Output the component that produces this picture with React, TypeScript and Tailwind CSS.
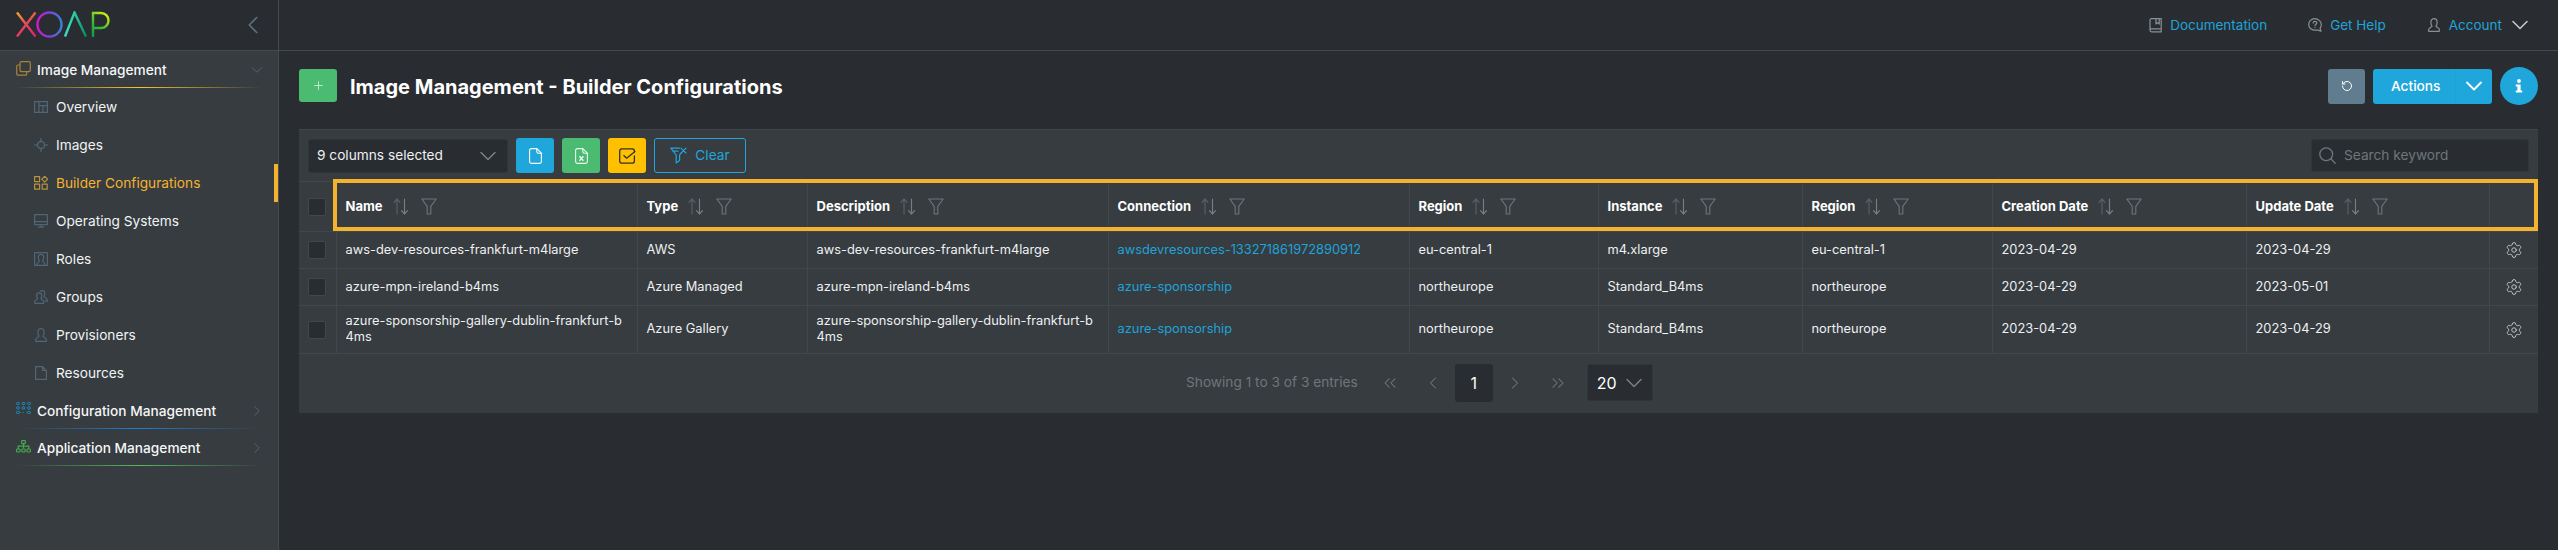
import React from "react";
import { ChevronDown, ChevronLeft, ChevronRight, ChevronsLeft, ChevronsRight, Plus, RotateCcw, Settings } from "lucide-react";

const Logo = () => (
  <svg width="96" height="28" viewBox="0 0 96 28" fill="none" strokeWidth="2.4">
    <defs>
      <linearGradient id="lx" gradientUnits="userSpaceOnUse" x1="1" y1="1" x2="19" y2="26"><stop offset="0" stopColor="#f5a623" /><stop offset="0.5" stopColor="#e8455a" /><stop offset="1" stopColor="#e11d74" /></linearGradient>
      <linearGradient id="lo" x1="0" y1="0" x2="1" y2="0"><stop offset="0" stopColor="#d418c8" /><stop offset="0.5" stopColor="#7d3fd6" /><stop offset="1" stopColor="#3b82d6" /></linearGradient>
      <linearGradient id="la" gradientUnits="userSpaceOnUse" x1="49" y1="26" x2="70" y2="26"><stop offset="0" stopColor="#3fdcc4" /><stop offset="0.5" stopColor="#25c8a0" /><stop offset="1" stopColor="#0a8a55" /></linearGradient>
      <linearGradient id="lp" gradientUnits="userSpaceOnUse" x1="77" y1="26" x2="94" y2="4"><stop offset="0" stopColor="#0a9a50" /><stop offset="0.5" stopColor="#45c02f" /><stop offset="1" stopColor="#e2f00f" /></linearGradient>
    </defs>
    <path d="M1 1.5 L19.5 25.5 M19.5 1.5 L1 25.5" stroke="url(#lx)" />
    <circle cx="33.5" cy="13.5" r="12" stroke="url(#lo)" />
    <path d="M49 25.5 L58.5 1.5 L70 25.5" stroke="url(#la)" />
    <path d="M77 26 V2 H85 A7.5 7.5 0 0 1 85 17 H77" stroke="url(#lp)" />
  </svg>
);

type IP = { className?: string };
const base = { fill: "none", stroke: "currentColor", strokeWidth: 1.2, strokeLinecap: "round" as const, strokeLinejoin: "round" as const };

const ICopy = ({ className }: IP) => (
  <svg width="15" height="15" viewBox="0 0 15 15" {...base} className={className}>
    <rect x="4" y="0.7" width="10.3" height="10" rx="1.4" />
    <path d="M4 4H2A1.4 1.4 0 0 0 .7 5.4V12.8A1.4 1.4 0 0 0 2 14.2H9.4A1.4 1.4 0 0 0 10.8 12.8V10.7" />
  </svg>
);
const IOverview = ({ className }: IP) => (
  <svg width="14" height="12" viewBox="0 0 14 12" {...base} strokeLinecap="butt" className={className}>
    <rect x="0.6" y="0.6" width="12.8" height="10.8" />
    <path d="M5 .6V11.4M5 4.6H13.4M9 4.6V11.4" />
  </svg>
);
const IImages = ({ className }: IP) => (
  <svg width="14" height="14" viewBox="0 0 14 14" {...base} className={className}>
    <path d="M7 .4V4M7 10V13.6M.4 7H4M10 7H13.6" />
    <circle cx="7" cy="7" r="3.6" />
  </svg>
);
const IBuilder = ({ className }: IP) => (
  <svg width="14" height="14" viewBox="0 0 14 14" {...base} strokeLinecap="butt" className={className}>
    <rect x="0.6" y="0.6" width="5" height="5" />
    <rect x="0.6" y="8.2" width="5" height="5" />
    <rect x="8.2" y="8.2" width="5" height="5" />
    <path d="M10.7 .3L13.6 3.2L10.7 6.1L7.8 3.2Z" />
  </svg>
);
const IMonitor = ({ className }: IP) => (
  <svg width="14" height="14" viewBox="0 0 14 14" {...base} strokeLinecap="butt" className={className}>
    <rect x="0.6" y="0.6" width="12.8" height="10" />
    <path d="M.6 7.6H13.4M7 10.6V13.2M4 13.2H10" />
  </svg>
);
const IRoles = ({ className }: IP) => (
  <svg width="14" height="14" viewBox="0 0 14 14" {...base} className={className}>
    <rect x="0.6" y="0.6" width="12.8" height="12.8" />
    <path d="M3 13.2C3 10.5 5 10.2 5.4 8.8C4.4 7.6 4.2 6.6 4.2 5.2C4.2 3.4 5.4 2.4 7 2.4C8.6 2.4 9.8 3.4 9.8 5.2C9.8 6.6 9.6 7.6 8.6 8.8C9 10.2 11 10.5 11 13.2" />
  </svg>
);
const IGroups = ({ className }: IP) => (
  <svg width="14" height="14" viewBox="0 0 14 14" {...base} className={className}>
    <path d="M.7 13.3V11.6C.7 10 3 9.8 3.6 8.6C2.8 7.6 2.6 6.8 2.6 5.4C2.6 3.8 3.6 2.8 5.2 2.8C6.8 2.8 7.8 3.8 7.8 5.4C7.8 6.8 7.6 7.6 6.8 8.6C7.4 9.8 9.7 10 9.7 11.6V13.3Z" />
    <path d="M6.2 1.4C6.8.9 7.5.7 8.2.7C9.8.7 10.8 1.7 10.8 3.3C10.8 4.7 10.6 5.5 9.8 6.5C10.4 7.7 13.3 8 13.3 9.6V11.2H11" />
  </svg>
);
const IUser = ({ className, w = 12 }: IP & { w?: number }) => (
  <svg width={w} height={(w * 14) / 12} viewBox="0 0 12 14" {...base} className={className}>
    <path d="M.7 13.3V11.6C.7 9.9 3.2 9.6 4 8.2C3.2 7.2 2.9 6.2 2.9 4.4C2.9 2 4.2.7 6 .7C7.8.7 9.1 2 9.1 4.4C9.1 6.2 8.8 7.2 8 8.2C8.8 9.6 11.3 9.9 11.3 11.6V13.3Z" />
  </svg>
);
const IFile = ({ className }: IP) => (
  <svg width="12" height="14" viewBox="0 0 12 14" {...base} strokeLinecap="butt" className={className}>
    <path d="M.6.6H7.5L11.4 4.5V13.4H.6ZM7.5.6V4.5H11.4" />
  </svg>
);
const IGrid = ({ className }: IP) => (
  <svg width="15" height="14" viewBox="0 0 15 14" fill="none" stroke="currentColor" strokeWidth="1" className={className}>
    {[1.5, 6, 10.5].map((y) => [2, 7.5, 13].map((x) => (y === 10.5 && x === 7.5 ? null : <rect key={`${x}${y}`} x={x - 1.4} y={y - 1.1} width="2.8" height="2.2" rx="0.8" />)))}
    <path d="M4.5 10.5H5M6.5 10.5H8.5M10 10.5H10.5" strokeDasharray="1 1" />
  </svg>
);
const ITree = ({ className }: IP) => (
  <svg width="15" height="13" viewBox="0 0 15 13" fill="none" stroke="currentColor" strokeWidth="1.2" className={className}>
    <rect x="5.6" y="0.6" width="3.8" height="3" rx="0.8" />
    <path d="M7.5 3.6V8.6M2.2 9V6.2H12.8V9" />
    <rect x="0.6" y="9" width="3.4" height="3" rx="0.8" />
    <rect x="5.8" y="9" width="3.4" height="3" rx="0.8" />
    <rect x="11" y="9" width="3.4" height="3" rx="0.8" />
  </svg>
);
const IBook = ({ className }: IP) => (
  <svg width="13" height="15" viewBox="0 0 13 15" {...base} className={className}>
    <path d="M1 12.6V2A1.3 1.3 0 0 1 2.3.7H12.2V10.8H2.5A1.5 1.5 0 0 0 1 12.3A1.6 1.6 0 0 0 2.5 13.9H12.2V10.8" />
    <path d="M7 .7V6L8.6 4.6L10.2 6V.7" />
  </svg>
);
const IHelp = ({ className }: IP) => (
  <svg width="14" height="14" viewBox="0 0 14 14" {...base} className={className}>
    <path d="M6.6.7A5.9 5.7 0 0 0 .7 6.4C.7 9.6 3.3 12.1 6.6 12.1H9.8L13 13.3L12 10.4C12.8 9.4 13.3 8 13.3 6.4C13.3 3.2 10 .7 6.6.7Z" />
    <path d="M5.2 5.1C5.2 4 6 3.4 7 3.4C8 3.4 8.8 4 8.8 5C8.8 6.3 7 6.3 7 7.6M7 9.3V9.4" />
  </svg>
);
const IDoc = ({ className }: IP) => (
  <svg width="13" height="16" viewBox="0 0 13 16" fill="none" stroke="currentColor" strokeWidth="1.1" strokeLinejoin="round" className={className}>
    <path d="M7.8.6H2.4A1.8 1.8 0 0 0 .6 2.4V13.6A1.8 1.8 0 0 0 2.4 15.4H10.6A1.8 1.8 0 0 0 12.4 13.6V5.2Z" />
    <path d="M7.8.6V3.4A1.8 1.8 0 0 0 9.6 5.2H12.4" />
  </svg>
);
const IXls = ({ className }: IP) => (
  <svg width="13" height="16" viewBox="0 0 13 16" fill="none" stroke="currentColor" strokeWidth="1.1" strokeLinejoin="round" className={className}>
    <path d="M7.8.6H2.4A1.8 1.8 0 0 0 .6 2.4V13.6A1.8 1.8 0 0 0 2.4 15.4H10.6A1.8 1.8 0 0 0 12.4 13.6V5.2Z" />
    <path d="M7.8.6V3.4A1.8 1.8 0 0 0 9.6 5.2H12.4" />
    <path d="M4.4 8.2L8.4 12.8M8.4 8.2L4.4 12.8" strokeWidth="1.4" />
  </svg>
);
const ICheck = ({ className }: IP) => (
  <svg width="17" height="16" viewBox="0 0 17 16" fill="none" stroke="currentColor" strokeWidth="1.3" strokeLinecap="round" strokeLinejoin="round" className={className}>
    <path d="M15.4 8V13A2.2 2.2 0 0 1 13.2 15.2H2.8A2.2 2.2 0 0 1 .7 13V3A2.2 2.2 0 0 1 2.8.8H13.2A2.2 2.2 0 0 1 15.4 3V4" />
    <path d="M4.8 7.6L7.6 10.2L16 3.6" />
  </svg>
);
const IClear = ({ className }: IP) => (
  <svg width="17" height="17" viewBox="0 0 17 17" fill="none" stroke="currentColor" strokeWidth="1.2" strokeLinejoin="round" strokeLinecap="round" className={className}>
    <path d="M9.5 1.2H.8L6.2 8V16L9.6 13.6V8L11 6.2" />
    <path d="M11 1.2L16 6.2M16 1.2L11 6.2" />
    <path d="M3.2 4.2H8" />
  </svg>
);
const IInfo = ({ className }: IP) => (
  <svg width="8" height="14" viewBox="0 0 8 14" fill="currentColor" className={className}>
    <circle cx="4" cy="2" r="1.9" />
    <path d="M.8 5.4H5.6V11.6H7.2V13.6H.8V11.6H2.4V7.4H.8Z" />
  </svg>
);
const ISearch = ({ className }: IP) => (
  <svg width="17" height="17" viewBox="0 0 17 17" fill="none" stroke="currentColor" strokeWidth="1.3" strokeLinecap="round" className={className}>
    <circle cx="7.2" cy="7.2" r="6.4" />
    <path d="M11.8 11.8L16.2 16.2" />
  </svg>
);
const SortFilter = () => (
  <span className="inline-flex items-center ml-[10px]">
    <svg width="16" height="17" viewBox="0 0 16 17" fill="none" strokeWidth="1.2" strokeLinecap="round" strokeLinejoin="round">
      <path d="M4 16V1M1 4.4L4 1L7 4.4" stroke="#596066" />
      <path d="M11.5 1V16M8.5 12.6L11.5 16L14.5 12.6" stroke="#767c80" />
    </svg>
    <svg width="16" height="17" viewBox="0 0 16 17" fill="none" stroke="#6f757a" strokeWidth="1.1" strokeLinejoin="round" className="ml-[12px]">
      <path d="M.8 1H15.2L9.8 8.4V16H6.2V8.4Z" />
    </svg>
  </span>
);

const cols = ["Name", "Type", "Description", "Connection", "Region", "Instance", "Region", "Creation Date", "Update Date"];
const rows = [
  ["aws-dev-resources-frankfurt-m4large", "AWS", "aws-dev-resources-frankfurt-m4large", "awsdevresources-133271861972890912", "eu-central-1", "m4.xlarge", "eu-central-1", "2023-04-29", "2023-04-29"],
  ["azure-mpn-ireland-b4ms", "Azure Managed", "azure-mpn-ireland-b4ms", "azure-sponsorship", "northeurope", "Standard_B4ms", "northeurope", "2023-04-29", "2023-05-01"],
  ["azure-sponsorship-gallery-dublin-frankfurt-b4ms", "Azure Gallery", "azure-sponsorship-gallery-dublin-frankfurt-b4ms", "azure-sponsorship", "northeurope", "Standard_B4ms", "northeurope", "2023-04-29", "2023-04-29"],
];

const SubItem = ({ icon: Icon, label, active }: { icon: any; label: string; active?: boolean }) => (
  <div className={`relative h-[38px] flex items-center pl-[34px] pr-3 text-[13.7px] ${active ? "text-[#f4b32f]" : "text-[#f1f3f4]"}`}>
    <span className={`w-[14px] mr-2 flex justify-center ${active ? "text-[#b8923c]" : "text-[#506675]"}`}><Icon /></span>
    {label}
    {active && <span className="absolute right-0 top-0 bottom-0 w-1 bg-[#f4b32f]" />}
  </div>
);

const Group = ({ icon: Icon, label, color, line, open }: { icon: any; label: string; color: string; line: string; open?: boolean }) => (
  <div className="h-[37px] px-4 flex flex-col">
    <div className="flex items-center flex-1 pt-[2px] text-[13.7px] font-medium text-[#f5f6f7]">
      <span className={`w-[15px] mr-[6px] -mt-[4px] flex ${color}`}><Icon /></span>
      <span className="flex-1">{label}</span>
      {open ? <ChevronDown size={18} strokeWidth={1} className="text-[#5c717f] -mr-1" /> : <ChevronRight size={18} strokeWidth={1} className="text-[#5c717f] -mr-1" />}
    </div>
    <div className={`h-px bg-gradient-to-r from-transparent to-transparent ${line}`} />
  </div>
);

export default function App() {
  return (
    <div className="flex h-[550px] w-[2558px] overflow-hidden bg-[#292d31] font-['Inter',sans-serif] text-[12.85px] text-[#eef0f1]">
      <aside className="w-[279px] shrink-0 flex flex-col border-r border-[#44494d]">
        <div className="h-[51px] shrink-0 flex items-center justify-between pl-[16px] pr-[10px] border-b border-[#44494d]">
          <Logo />
          <ChevronLeft size={30} strokeWidth={1.3} className="text-[#5c717f]" />
        </div>
        <nav className="flex-1 bg-[#363c40]">
          <Group icon={ICopy} label="Image Management" color="text-[#a9823a]" line="via-[#f4c430]" open />
          <SubItem icon={IOverview} label="Overview" />
          <SubItem icon={IImages} label="Images" />
          <SubItem icon={IBuilder} label="Builder Configurations" active />
          <SubItem icon={IMonitor} label="Operating Systems" />
          <SubItem icon={IRoles} label="Roles" />
          <SubItem icon={IGroups} label="Groups" />
          <SubItem icon={IUser} label="Provisioners" />
          <SubItem icon={IFile} label="Resources" />
          <Group icon={IGrid} label="Configuration Management" color="text-[#1f8fc7]" line="via-[#1f7fd0]" />
          <Group icon={ITree} label="Application Management" color="text-[#46a84f]" line="via-[#57b85f]" />
        </nav>
      </aside>
      <main className="flex-1 min-w-0 flex flex-col">
        <header className="h-[51px] shrink-0 flex items-center justify-end pr-[24px] border-b border-[#44494d] text-[13.5px] text-[#1fa3d8]">
          <IBook className="text-[#8a9095] mr-[8px]" />
          <span>Documentation</span>
          <IHelp className="text-[#8a9095] ml-[41px] mr-[8px]" />
          <span>Get Help</span>
          <IUser className="text-[#8a9095] ml-[42px] mr-[9px]" />
          <span>Account</span>
          <ChevronDown size={28} strokeWidth={1.3} className="text-[#c6cacc] ml-[4px]" />
        </header>
        <section className="pl-[20px] pr-[20px] pt-[16px]">
          <div className="flex items-center h-[38px]">
            <button className="self-start mt-[2px] w-[38px] h-[33px] rounded-[3px] bg-[#4cbb72] flex items-center justify-center"><Plus size={13} strokeWidth={1.5} className="text-[#d9f3e2]" /></button>
            <h1 className="ml-[13px] mt-[2px] text-[20px] font-bold text-white flex-1">Image Management - Builder Configurations</h1>
            <button className="w-[37px] h-[35px] rounded-[3px] bg-[#5f7d8e] flex items-center justify-center"><RotateCcw size={12} className="text-white" /></button>
            <div className="ml-[8px] w-[119px] h-[35px] rounded-[3px] bg-[#1fa7db] flex items-center text-[13.7px] font-medium text-white">
              <span className="pl-[18px] flex-1">Actions</span>
              <span className="w-[37px] h-full flex items-center justify-center border-l border-[#1ea1d3]"><ChevronDown size={28} strokeWidth={1.6} /></span>
            </div>
            <div className="ml-[8px] w-[38px] h-[38px] rounded-full bg-[#1fa7db] flex items-center justify-center"><IInfo className="text-white" /></div>
          </div>
          <div className="relative mt-[24px] h-[284px] bg-[#363c40] border-t border-[#3f4549]">
            <div className="h-[52px] px-[9px] flex items-center gap-[8px] border-b border-[#41474b]">
              <div className="w-[200px] h-[34px] rounded-[3px] bg-[#292d31] border border-[#30353a] flex items-center justify-between pl-[8px] pr-[5px] text-[13.7px]">
                9 columns selected <ChevronDown size={28} strokeWidth={1.2} className="text-[#7d8387]" />
              </div>
              <button className="w-[38px] h-[35px] rounded-[3px] bg-[#1fa7db] flex items-center justify-center"><IDoc className="text-white" /></button>
              <button className="w-[38px] h-[35px] rounded-[3px] bg-[#4cbb72] flex items-center justify-center"><IXls className="text-[#eafaf0]" /></button>
              <button className="w-[38px] h-[35px] rounded-[3px] bg-[#ffc000] flex items-center justify-center"><ICheck className="text-[#33322c]" /></button>
              <button className="w-[92px] h-[35px] rounded-[3px] border border-[#1fa7db] text-[#1fa7db] flex items-center justify-center gap-[8px] text-[13.7px]"><IClear />Clear</button>
              <div className="ml-auto w-[218px] h-[33px] rounded-[3px] bg-[#292d31] border border-[#30353a] flex items-center pl-[7px] text-[13.7px] text-[#6f767b]">
                <ISearch className="mr-[8px]" />Search keyword
              </div>
            </div>
            <table className="w-full table-fixed border-collapse">
              <colgroup>
                {[37, 301, 170, 301, 301, 189, 204, 190, 254, 243, 49].map((w, i) => <col key={i} style={{ width: w }} />)}
              </colgroup>
              <thead>
                <tr className="h-[49px] border-b border-[#41474b]">
                  <th className="text-center"><span className="inline-block align-middle w-[18px] h-[18px] rounded-[2px] bg-[#292d31] border border-[#41474b]" /></th>
                  {cols.map((c, i) => (
                    <th key={i} className="pl-[9px] text-left font-bold text-[13px] border-l border-[#41474b] text-white whitespace-nowrap">
                      <span className="inline-flex items-center">{c}<SortFilter /></span>
                    </th>
                  ))}
                  <th className="border-l border-[#41474b]" />
                </tr>
              </thead>
              <tbody>
                {rows.map((r, ri) => (
                  <tr key={ri} className={`border-b border-[#41474b] ${ri === 2 ? "h-[48px]" : "h-[37px]"}`}>
                    <td className="text-center"><span className="inline-block align-middle w-[18px] h-[18px] rounded-[2px] bg-[#292d31] border border-[#41474b]" /></td>
                    {r.map((v, i) => (
                      <td key={i} className={`px-[9px] leading-[16px] border-l border-[#41474b] break-all ${i === 3 ? "text-[#1fa3d8]" : ""}`}>{v}</td>
                    ))}
                    <td className="border-l border-[#41474b] text-center"><Settings size={18} strokeWidth={1.1} className="inline-block text-[#d4d7d9]" /></td>
                  </tr>
                ))}
              </tbody>
            </table>
            <div className="h-[58px] flex items-center pl-[887px] text-[#6f767b] text-[13.7px]">
              <span>Showing 1 to 3 of 3 entries</span>
              <ChevronsLeft size={20} strokeWidth={1.25} className="ml-[22px]" />
              <ChevronLeft size={20} strokeWidth={1.25} className="ml-[23px]" />
              <span className="ml-[12px] w-[38px] h-[38px] rounded-[3px] bg-[#292d31] text-white text-[16px] flex items-center justify-center">1</span>
              <ChevronRight size={20} strokeWidth={1.25} className="ml-[12px]" />
              <ChevronsRight size={20} strokeWidth={1.25} className="ml-[23px]" />
              <div className="ml-[19px] w-[66px] h-[37px] rounded-[3px] bg-[#292d31] border border-[#30353a] text-white text-[16px] flex items-center justify-between pl-[9px] pr-[4px]">20 <ChevronDown size={28} strokeWidth={1.2} className="text-[#7d8387]" /></div>
            </div>
            <div className="absolute left-[34px] top-[49px] w-[2205px] h-[52px] border-4 border-[#f4b32f] pointer-events-none" />
          </div>
        </section>
      </main>
    </div>
  );
}
